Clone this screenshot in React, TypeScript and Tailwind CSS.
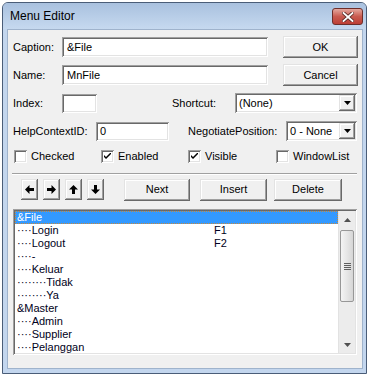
import React from "react";

const raised =
  "bg-[#f0f0f0] shadow-[inset_-1px_-1px_0_#696969,inset_1px_1px_0_#e3e3e3,inset_-2px_-2px_0_#a0a0a0,inset_2px_2px_0_#ffffff]";
const sunken =
  "bg-white shadow-[inset_1px_1px_0_#a0a0a0,inset_-1px_-1px_0_#ffffff,inset_2px_2px_0_#696969,inset_-2px_-2px_0_#e3e3e3]";

interface Item {
  text: string;
  key?: string;
}

const items: Item[] = [
  { text: "&File" },
  { text: "····Login", key: "F1" },
  { text: "····Logout", key: "F2" },
  { text: "····-" },
  { text: "····Keluar" },
  { text: "········Tidak" },
  { text: "········Ya" },
  { text: "&Master" },
  { text: "····Admin" },
  { text: "····Supplier" },
  { text: "····Pelanggan" },
];

function Button({ label, w }: { label: string; w: string }) {
  return (
    <div className={`${raised} ${w} h-[22px] flex items-center justify-center text-black`}>
      {label}
    </div>
  );
}

function Combo({ value, w }: { value: string; w: string }) {
  return (
    <div className={`${sunken} ${w} h-[20px] flex items-center p-[2px]`}>
      <span className="flex-1 pl-[2px] text-black">{value}</span>
      <div className={`${raised} w-[16px] h-[16px] flex items-center justify-center`}>
        <svg width="7" height="4" viewBox="0 0 7 4">
          <path d="M0 0 H7 L3.5 4 Z" fill="#000" />
        </svg>
      </div>
    </div>
  );
}

function Check({ label, checked, w }: { label: string; checked: boolean; w: string }) {
  return (
    <div className={`flex items-center gap-[4px] ${w}`}>
      <div className={`${sunken} w-[13px] h-[13px] flex items-center justify-center`}>
        {checked && (
          <svg width="7" height="7" viewBox="0 0 7 7">
            <path d="M0 2 L0 4 L2 6 L7 1 L7 -1 L2 4 Z" fill="#000" />
          </svg>
        )}
      </div>
      <span>{label}</span>
    </div>
  );
}

function Arrow({ dir }: { dir: "left" | "right" | "up" | "down" }) {
  const rot = { left: "rotate-0", right: "rotate-180", up: "rotate-90", down: "-rotate-90" }[dir];
  return (
    <div className={`${raised} w-[17px] h-[21px] flex items-center justify-center`}>
      <svg width="9" height="9" viewBox="0 0 9 9" className={rot}>
        <path d="M0 4.5 L4.5 0 V3 H9 V6 H4.5 V9 Z" fill="#000" />
      </svg>
    </div>
  );
}

function ScrollBar() {
  return (
    <div className="w-[17px] h-full bg-[#ececec] border-l border-[#e2e2e2] flex flex-col">
      <div className="h-[17px] flex items-center justify-center">
        <svg width="7" height="4" viewBox="0 0 7 4">
          <path d="M0 4 H7 L3.5 0 Z" fill="#505050" />
        </svg>
      </div>
      <div className="mx-[1px] mt-[2px] h-[72px] rounded-[2px] border border-[#979797] bg-gradient-to-r from-[#f4f4f4] via-[#e6e6e6] to-[#d6d6d6] flex flex-col items-center justify-center gap-[1px]">
        <div className="w-[7px] h-px bg-[#5f5f5f]" />
        <div className="w-[7px] h-px bg-[#5f5f5f]" />
        <div className="w-[7px] h-px bg-[#5f5f5f]" />
        <div className="w-[7px] h-px bg-[#5f5f5f]" />
      </div>
      <div className="flex-1" />
      <div className="h-[17px] flex items-center justify-center">
        <svg width="7" height="4" viewBox="0 0 7 4">
          <path d="M0 0 H7 L3.5 4 Z" fill="#505050" />
        </svg>
      </div>
    </div>
  );
}

export default function App() {
  return (
    <div className="w-[371px] h-[375px] bg-white pt-[2px] pl-[2px] font-['Liberation_Sans',Arial,sans-serif] text-[11px] text-black">
      <div className="w-[365px] h-[372px] border border-[#4a5d78] rounded-t-[6px] bg-[#c3d6ee] flex flex-col">
        <div className="h-[26px] flex items-center justify-between pl-[7px] pr-[3px] rounded-t-[5px] bg-gradient-to-b from-[#a9c1df] to-[#c6d9ef]">
          <span className="text-[12px] text-black">Menu Editor</span>
          <div className="w-[31px] h-[17px] mt-[1px] rounded-[3px] border border-[#6e2e2a] bg-gradient-to-b from-[#e3a79f] via-[#c95a50] to-[#bd3f35] flex items-center justify-center">
            <svg width="12" height="10" viewBox="0 0 12 10">
              <path d="M1.5 1 L10.5 9 M10.5 1 L1.5 9" stroke="#5a2a26" strokeWidth="3.6" strokeLinecap="square" />
              <path d="M1.5 1 L10.5 9 M10.5 1 L1.5 9" stroke="#ffffff" strokeWidth="1.8" strokeLinecap="square" />
            </svg>
          </div>
        </div>
        <div className="ml-[4px] w-[356px] h-[340px] border border-[#9fb3cc] bg-[#f0f0f0] flex flex-col">
          <div className="mt-[6px] pl-[5px] h-[22px] flex items-center">
            <span className="w-[49px]">Caption:</span>
            <div className={`${sunken} w-[206px] h-[20px] flex items-center pl-[5px]`}>&File</div>
            <div className="ml-[15px]">
              <Button label="OK" w="w-[75px]" />
            </div>
          </div>
          <div className="mt-[6px] pl-[5px] h-[22px] flex items-center">
            <span className="w-[49px]">Name:</span>
            <div className={`${sunken} w-[206px] h-[20px] flex items-center pl-[5px]`}>MnFile</div>
            <div className="ml-[15px]">
              <Button label="Cancel" w="w-[75px]" />
            </div>
          </div>
          <div className="mt-[7px] pl-[5px] h-[20px] flex items-center">
            <span className="w-[49px]">Index:</span>
            <div className={`${sunken} w-[35px] h-[19px]`} />
            <span className="ml-[75px] w-[63px]">Shortcut:</span>
            <Combo value="(None)" w="w-[122px]" />
          </div>
          <div className="mt-[8px] pl-[5px] h-[20px] flex items-center">
            <span className="w-[83px]">HelpContextID:</span>
            <div className={`${sunken} w-[73px] h-[19px] flex items-center pl-[4px]`}>0</div>
            <span className="ml-[19px] w-[98px]">NegotiatePosition:</span>
            <Combo value="0 - None" w="w-[71px]" />
          </div>
          <div className="mt-[9px] pl-[6px] h-[13px] flex items-center">
            <Check label="Checked" checked={false} w="w-[87px]" />
            <Check label="Enabled" checked={true} w="w-[87px]" />
            <Check label="Visible" checked={true} w="w-[88px]" />
            <Check label="WindowList" checked={false} w="w-[80px]" />
          </div>
          <div className="mt-[10px] ml-[4px] w-[345px] h-[2px] border-t border-[#a0a0a0] border-b border-b-white" />
          <div className="mt-[4px] pl-[13px] h-[21px] flex items-center">
            <div className="flex gap-[5px]">
              <Arrow dir="left" />
              <Arrow dir="right" />
              <Arrow dir="up" />
              <Arrow dir="down" />
            </div>
            <div className="ml-[20px] flex">
              <Button label="Next" w="w-[66px]" />
              <div className="ml-[10px]">
                <Button label="Insert" w="w-[67px]" />
              </div>
              <div className="ml-[7px]">
                <Button label="Delete" w="w-[68px]" />
              </div>
            </div>
          </div>
          <div className={`${sunken} mt-[9px] ml-[5px] w-[344px] h-[146px] p-[2px] flex`}>
            <div className="flex-1 overflow-hidden">
              {items.map((it, i) => (
                <div
                  key={i}
                  className={`h-[13px] flex items-center leading-[13px] ${
                    i === 0 ? "bg-[#3399ff] text-white outline outline-1 outline-dotted outline-[#c8893c] -outline-offset-1" : "text-[#000020]"
                  }`}
                >
                  <span className="w-[199px] pl-[2px] whitespace-pre">{it.text}</span>
                  {it.key && <span>{it.key}</span>}
                </div>
              ))}
            </div>
            <ScrollBar />
          </div>
        </div>
      </div>
    </div>
  );
}
